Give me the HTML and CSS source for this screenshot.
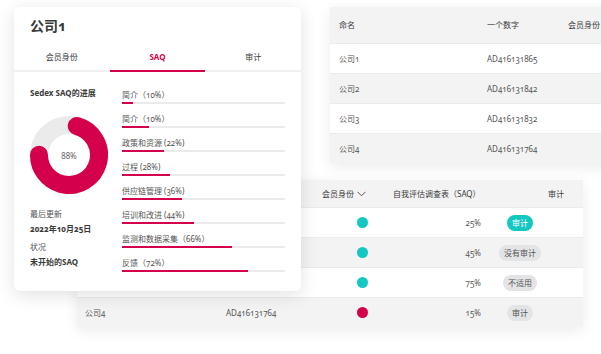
FILE: index.html
```html
<!DOCTYPE html>
<html lang="zh-CN">
<head>
    <meta charset="UTF-8">
    <meta name="viewport" content="width=device-width, initial-scale=1.0">
    <title>公司1 - SAQ</title>
    <link rel="stylesheet" href="styles.css">
</head>
<body>
    <div class="canvas">
        <!-- back table: company list -->
        <section class="card companies">
            <div class="row head">
                <span>命名</span>
                <span>一个数字</span>
                <span>会员身份</span>
            </div>
            <div class="row">
                <span>公司1</span>
                <span>AD416131865</span>
                <span></span>
            </div>
            <div class="row alt">
                <span>公司2</span>
                <span>AD416131842</span>
                <span></span>
            </div>
            <div class="row">
                <span>公司3</span>
                <span>AD416131832</span>
                <span></span>
            </div>
            <div class="row alt">
                <span>公司4</span>
                <span>AD416131764</span>
                <span></span>
            </div>
        </section>

        <!-- back table: status (first columns sit under the front card) -->
        <section class="card status">
            <div class="row head">
                <span></span>
                <span></span>
                <span class="sort">会员身份
                    <svg width="9" height="6" viewBox="0 0 9 6"><polyline points="0.5,0.8 4.5,4.8 8.5,0.8" fill="none" stroke="#555" stroke-width="1"/></svg>
                </span>
                <span>自我评估调查表（SAQ）</span>
                <span class="audit-head">审计</span>
            </div>
            <div class="row">
                <span></span>
                <span></span>
                <span class="member"><i class="dot teal"></i></span>
                <span class="pct">25%</span>
                <span class="audit"><b class="badge on">审计</b></span>
            </div>
            <div class="row alt">
                <span></span>
                <span></span>
                <span class="member"><i class="dot teal"></i></span>
                <span class="pct">45%</span>
                <span class="audit"><b class="badge">没有审计</b></span>
            </div>
            <div class="row">
                <span></span>
                <span></span>
                <span class="member"><i class="dot teal"></i></span>
                <span class="pct">75%</span>
                <span class="audit"><b class="badge">不适用</b></span>
            </div>
            <div class="row alt">
                <span>公司4</span>
                <span>AD416131764</span>
                <span class="member"><i class="dot red"></i></span>
                <span class="pct">15%</span>
                <span class="audit"><b class="badge">审计</b></span>
            </div>
        </section>

        <!-- front card -->
        <section class="card detail">
            <h2 class="title">公司1</h2>
            <nav class="tabs">
                <a href="#">会员身份</a>
                <a href="#" class="active">SAQ</a>
                <a href="#">审计</a>
            </nav>
            <div class="detail-body">
                <div class="summary">
                    <h3>Sedex SAQ的进展</h3>
                    <div class="donut">
                        <svg width="78" height="78" viewBox="0 0 78 78">
                            <circle cx="39" cy="39" r="30" fill="none" stroke="#ebebeb" stroke-width="18"/>
                            <circle cx="39" cy="39" r="30" fill="none" stroke="#d4004b" stroke-width="18"
                                stroke-linecap="round" stroke-dasharray="133.5 200" transform="rotate(-75 39 39)"/>
                        </svg>
                        <span>88%</span>
                    </div>
                    <p class="label first">最后更新</p>
                    <p class="value">2022年10月25日</p>
                    <p class="label">状况</p>
                    <p class="value">未开始的SAQ</p>
                </div>
                <ul class="sections">
                    <li><span>简介（10%）</span><div class="track"><div class="fill" style="width: 6.7%"></div></div></li>
                    <li><span>简介（10%）</span><div class="track"><div class="fill" style="width: 16.6%"></div></div></li>
                    <li><span>政策和资源 (22%)</span><div class="track"><div class="fill" style="width: 25.8%"></div></div></li>
                    <li><span>过程 (28%)</span><div class="track"><div class="fill" style="width: 29.4%"></div></div></li>
                    <li><span>供应链管理 (36%)</span><div class="track"><div class="fill" style="width: 36.8%"></div></div></li>
                    <li><span>培训和改进 (44%)</span><div class="track"><div class="fill" style="width: 44.2%"></div></div></li>
                    <li><span>监测和数据采集（66%）</span><div class="track"><div class="fill" style="width: 67.5%"></div></div></li>
                    <li><span>反馈（72%）</span><div class="track"><div class="fill" style="width: 77.3%"></div></div></li>
                </ul>
            </div>
        </section>
    </div>
</body>
</html>
```

FILE: styles.css
```css
body {
    margin: 0;
    background: #fff;
    font-family: "Noto Sans", "Noto Sans CJK SC", sans-serif;
    font-variant-numeric: oldstyle-nums;
    color: #555;
    font-size: 8px;
}
.canvas {
    position: relative;
    width: 601px;
    height: 354px;
    overflow: hidden;
}
.card {
    position: absolute;
    background: #fff;
    box-shadow: 0 4px 14px rgba(0, 0, 0, 0.08);
}

/* shared table rows */
.row {
    display: grid;
    align-items: center;
    height: 30px;
    border-top: 1px solid #ebebeb;
    box-sizing: border-box;
    line-height: 12px;
}
.row.alt {
    background: #f3f3f3;
}
.row.head {
    background: #f3f3f3;
    border-top: none;
    color: #3a3a3a;
}

/* company list */
.companies {
    left: 330px;
    top: 7px;
    width: 300px;
}
.companies .row {
    grid-template-columns: 148px 81px 1fr;
    padding-left: 9px;
}
.companies .row.head {
    height: 36px;
}

/* status table */
.status {
    left: 77px;
    top: 180px;
    width: 506px;
    border-radius: 0 4px 4px 0;
}
.status .row {
    grid-template-columns: 141px 96px 71px 92px 1fr;
    padding-left: 8px;
}
.status .row.head {
    height: 27px;
}
.sort {
    display: flex;
    align-items: center;
    gap: 3px;
}
.member {
    padding-left: 35px;
    display: flex;
}
.dot {
    width: 11px;
    height: 11px;
    border-radius: 50%;
}
.dot.teal {
    background: #14c7c1;
}
.dot.red {
    background: #d4004b;
}
.pct {
    text-align: right;
    padding-right: 4px;
}
.audit-head {
    padding-left: 63px;
}
.audit {
    display: flex;
    justify-content: center;
    padding-right: 28px;
}
.badge {
    font-weight: normal;
    background: #e3e4e6;
    color: #555;
    border-radius: 8px;
    padding: 2px 5px;
    line-height: 12px;
}
.badge.on {
    background: #14c7c1;
    color: #fff;
}

/* front card */
.detail {
    left: 14px;
    top: 7px;
    width: 287px;
    height: 284px;
    border-radius: 6px;
    box-shadow: 0 4px 18px rgba(0, 0, 0, 0.12);
}
.title {
    margin: 0;
    padding: 11px 16px 0;
    height: 16px;
    line-height: 16px;
    font-size: 14px;
    font-weight: bold;
    color: #3a3a3a;
}
.tabs {
    display: flex;
    margin-top: 17px;
    border-bottom: 2px solid #f0f0f0;
}
.tabs a {
    flex: 1;
    text-align: center;
    text-decoration: none;
    color: #3a3a3a;
    line-height: 12px;
    padding-bottom: 7px;
    margin-bottom: -2px;
    border-bottom: 2px solid transparent;
}
.tabs a.active {
    color: #d4004b;
    font-weight: bold;
    border-bottom-color: #d4004b;
}
.detail-body {
    display: grid;
    grid-template-columns: 92px 163px;
    padding: 0 16px;
}
.summary h3 {
    margin: 15px 0 0;
    font-size: 8px;
    line-height: 12px;
    font-weight: bold;
    color: #3a3a3a;
}
.donut {
    position: relative;
    width: 78px;
    height: 78px;
    margin-top: 17px;
}
.donut svg {
    display: block;
}
.donut span {
    position: absolute;
    inset: 0;
    display: flex;
    align-items: center;
    justify-content: center;
    color: #666;
}
.summary p {
    margin: 0;
    line-height: 12px;
}
.summary .label {
    margin-top: 6px;
    color: #555;
}
.summary .label.first {
    margin-top: 14px;
}
.summary .value {
    margin-top: 3px;
    font-weight: bold;
    color: #3a3a3a;
}
.sections {
    list-style: none;
    margin: 0;
    padding: 17px 0 0;
}
.sections li {
    margin-bottom: 9px;
}
.sections span {
    display: block;
    line-height: 12px;
    color: #555;
}
.track {
    height: 2px;
    margin-top: 1px;
    background: #ebebeb;
}
.fill {
    height: 2px;
    background: #d4004b;
}
```
